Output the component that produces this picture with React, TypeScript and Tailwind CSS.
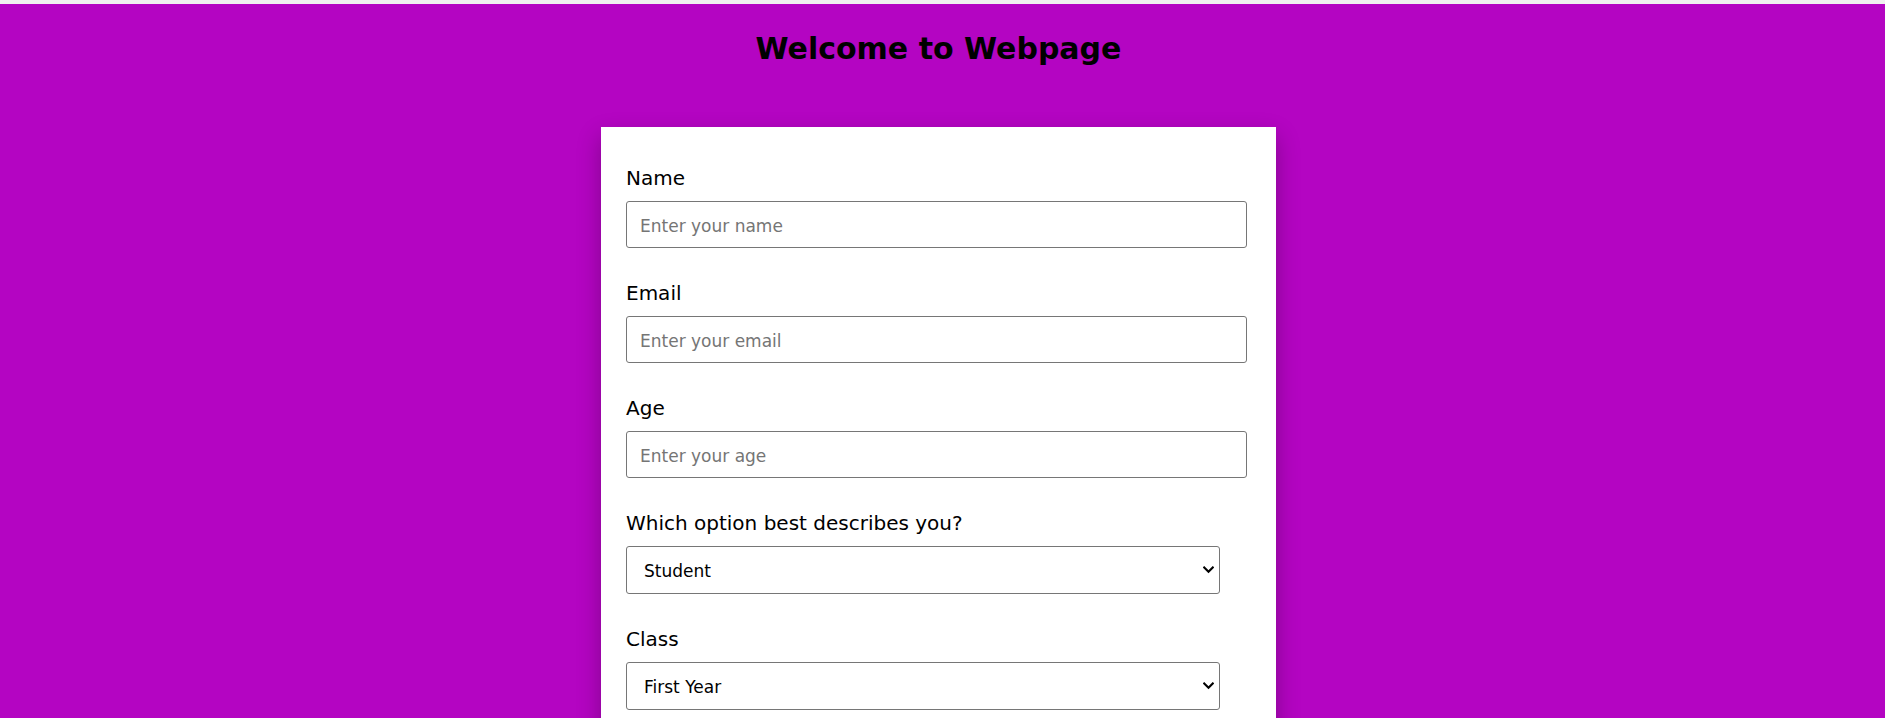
import React from "react";

const fieldFont = "font-['DejaVu_Sans',sans-serif]";

function Label({ children }: { children: React.ReactNode }) {
  return (
    <label className={`block text-[20px] leading-[24px] text-black ${fieldFont}`}>
      {children}
    </label>
  );
}

function TextField({ label, placeholder, first }: { label: string; placeholder: string; first?: boolean }) {
  return (
    <div className={first ? "" : "mt-[33px]"}>
      <Label>{label}</Label>
      <input
        type="text"
        placeholder={placeholder}
        className={`mt-[11px] block h-[47px] w-[621px] rounded-[3px] border border-[#767676] bg-white px-[13px] pt-[2px] text-[17px] text-black placeholder:text-[#757575] outline-none ${fieldFont}`}
      />
    </div>
  );
}

function SelectField({ label, value, options }: { label: string; value: string; options: string[] }) {
  return (
    <div className="mt-[33px]">
      <Label>{label}</Label>
      <div className="relative mt-[11px] h-[48px] w-[594px]">
        <select
          defaultValue={value}
          className={`block h-[48px] w-[594px] appearance-none rounded-[3px] border border-[#767676] bg-white pl-[17px] pr-[30px] pt-[4px] text-[17px] text-black outline-none ${fieldFont}`}
        >
          {options.map((o) => (
            <option key={o} value={o}>
              {o}
            </option>
          ))}
        </select>
        <svg
          className="pointer-events-none absolute right-[6px] top-[20px]"
          width="11"
          height="8"
          viewBox="0 0 11 8"
          fill="none"
        >
          <path d="M1.2 1.5 L5.5 5.8 L9.8 1.5" stroke="#000" strokeWidth="2.2" strokeLinecap="square" />
        </svg>
      </div>
    </div>
  );
}

export default function App() {
  return (
    <div className="min-h-[718px] w-full overflow-hidden">
      <div className="h-[4px] bg-[#f0f0f0]" />
      <div className="min-h-[714px] bg-[#b405c2] pr-[8px] pt-[27px]">
        <h1 className="text-center font-['DejaVu_Sans',sans-serif] text-[30px] font-bold leading-[36px] text-black">
          Welcome to Webpage
        </h1>
        <div className="mx-auto mt-[60px] w-[675px] bg-white pl-[25px] pr-[25px] pb-[60px] pt-[39px] shadow-[0_10px_22px_rgba(0,0,0,0.28)]">
          <TextField first label="Name" placeholder="Enter your name" />
          <TextField label="Email" placeholder="Enter your email" />
          <TextField label="Age" placeholder="Enter your age" />
          <SelectField label="Which option best describes you?" value="Student" options={["Student", "Full Time Job", "Full Time Learner", "Other"]} />
          <SelectField label="Class" value="First Year" options={["First Year", "Second Year", "Third Year", "Fourth Year"]} />
        </div>
      </div>
    </div>
  );
}
